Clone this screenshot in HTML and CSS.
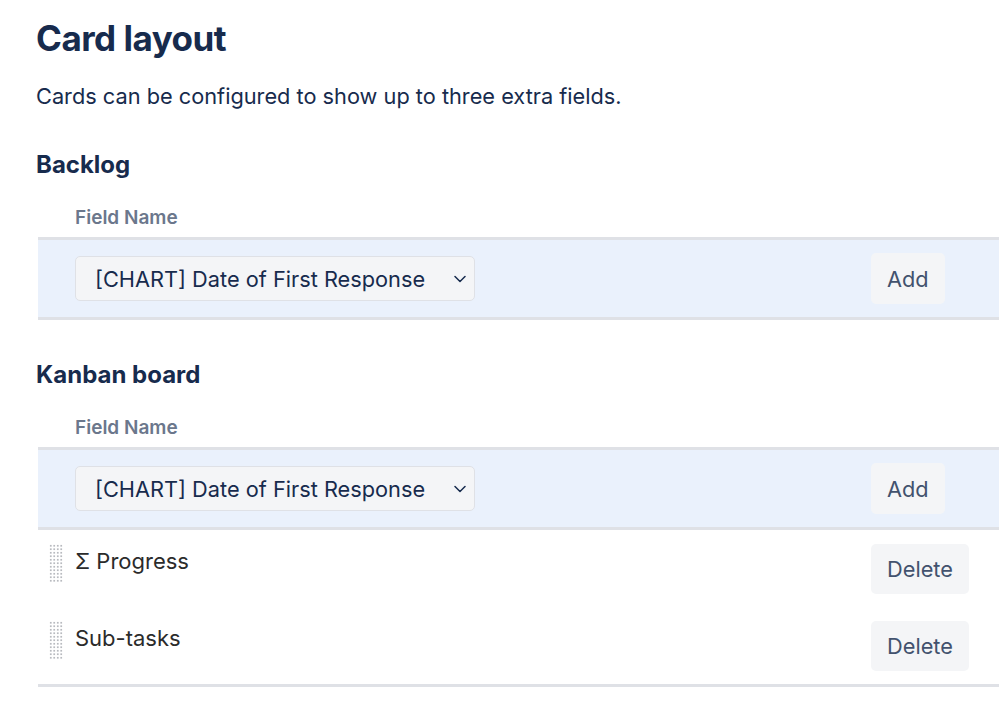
FILE: index.html
```html
<!DOCTYPE html>
<html lang="en">
<head>
<meta charset="utf-8">
<title>Card layout</title>
<link rel="stylesheet" href="styles.css">
</head>
<body>
<main class="page">
  <h1 class="title">Card layout</h1>
  <p class="desc">Cards can be configured to show up to three extra fields.</p>

  <section class="section">
    <h2 class="section-title">Backlog</h2>
    <div class="fields">
      <div class="fields-head">
        <span class="cell-handle"></span>
        <span class="head-name">Field Name</span>
        <span class="cell-actions"></span>
      </div>
      <div class="row row-add">
        <span class="cell-handle"></span>
        <span class="cell-name">
          <span class="select">
            <span class="select-text">[CHART] Date of First Response</span>
            <svg class="chevron" width="12" height="8" viewBox="0 0 12 8"><path d="M1 1.5 L6 6.5 L11 1.5" fill="none" stroke="#172B4D" stroke-width="1.5" stroke-linecap="round" stroke-linejoin="round"/></svg>
          </span>
        </span>
        <span class="cell-actions"><button class="btn">Add</button></span>
      </div>
    </div>
  </section>

  <section class="section">
    <h2 class="section-title">Kanban board</h2>
    <div class="fields">
      <div class="fields-head">
        <span class="cell-handle"></span>
        <span class="head-name">Field Name</span>
        <span class="cell-actions"></span>
      </div>
      <div class="row row-add">
        <span class="cell-handle"></span>
        <span class="cell-name">
          <span class="select">
            <span class="select-text">[CHART] Date of First Response</span>
            <svg class="chevron" width="12" height="8" viewBox="0 0 12 8"><path d="M1 1.5 L6 6.5 L11 1.5" fill="none" stroke="#172B4D" stroke-width="1.5" stroke-linecap="round" stroke-linejoin="round"/></svg>
          </span>
        </span>
        <span class="cell-actions"><button class="btn">Add</button></span>
      </div>
      <div class="row row-item">
        <span class="cell-handle"><span class="handle"></span></span>
        <span class="cell-name item-name">Σ Progress</span>
        <span class="cell-actions"><button class="btn btn-delete">Delete</button></span>
      </div>
      <div class="row row-item">
        <span class="cell-handle"><span class="handle"></span></span>
        <span class="cell-name item-name">Sub-tasks</span>
        <span class="cell-actions"><button class="btn btn-delete">Delete</button></span>
      </div>
    </div>
  </section>
</main>
</body>
</html>
```

FILE: styles.css
```css
html, body {
  margin: 0;
  padding: 0;
  background: #ffffff;
}

body {
  font-family: Inter, "Noto Sans", "Liberation Sans", sans-serif;
  color: #172B4D;
  overflow: hidden;
}

.page {
  padding: 18px 0 0 36px;
}

.title {
  margin: 0;
  font-size: 35px;
  line-height: 40px;
  font-weight: 700;
  letter-spacing: -0.5px;
  color: #172B4D;
}

.desc {
  margin: 24px 0 0 0;
  font-size: 21.75px;
  line-height: 28px;
  color: #172B4D;
}

.section {
  margin-top: 40px;
}

.section-title {
  margin: 0;
  font-size: 24px;
  line-height: 30px;
  font-weight: 700;
  color: #172B4D;
}

.fields {
  margin: 25px 0 0 2px;
}

.fields-head {
  display: grid;
  grid-template-columns: 37px 1fr 128px;
  border-bottom: 3px solid #DFE1E6;
  padding-bottom: 6px;
}

.head-name {
  font-size: 19px;
  line-height: 26px;
  font-weight: 600;
  color: #6B778C;
}

.row {
  display: grid;
  grid-template-columns: 37px 1fr 128px;
}

.row-add {
  background: #EAF1FC;
  align-items: center;
  padding: 13px 0 13px 0;
  border-bottom: 3px solid #DFE1E6;
}

.row-item {
  align-items: start;
  padding: 14px 0 13px 0;
}

.row-item:last-child {
  border-bottom: 3px solid #DFE1E6;
}

.cell-handle {
  display: flex;
  padding-left: 11px;
}

.handle {
  display: block;
  width: 14px;
  height: 38px;
  background-image: radial-gradient(circle, #B8BABF 1px, transparent 1.3px);
  background-size: 3.5px 3.5px;
}

.select {
  box-sizing: border-box;
  display: flex;
  align-items: center;
  justify-content: space-between;
  width: 400px;
  height: 45px;
  padding: 0 8px 0 19px;
  background: #F4F5F7;
  border: 1.5px solid #DFE1E6;
  border-radius: 5px;
  font-size: 21.75px;
  color: #172B4D;
}

.chevron {
  display: block;
  margin-top: 1px;
}

.item-name {
  font-size: 22px;
  line-height: 30px;
  color: #2B2B2B;
  padding-top: 2px;
}

.btn {
  font-family: inherit;
  font-size: 21.75px;
  color: #42526E;
  background: #F4F5F7;
  border: none;
  border-radius: 5px;
  padding: 0 16px;
  height: 51px;
  cursor: pointer;
}

.btn-delete {
  height: 50px;
}
```
